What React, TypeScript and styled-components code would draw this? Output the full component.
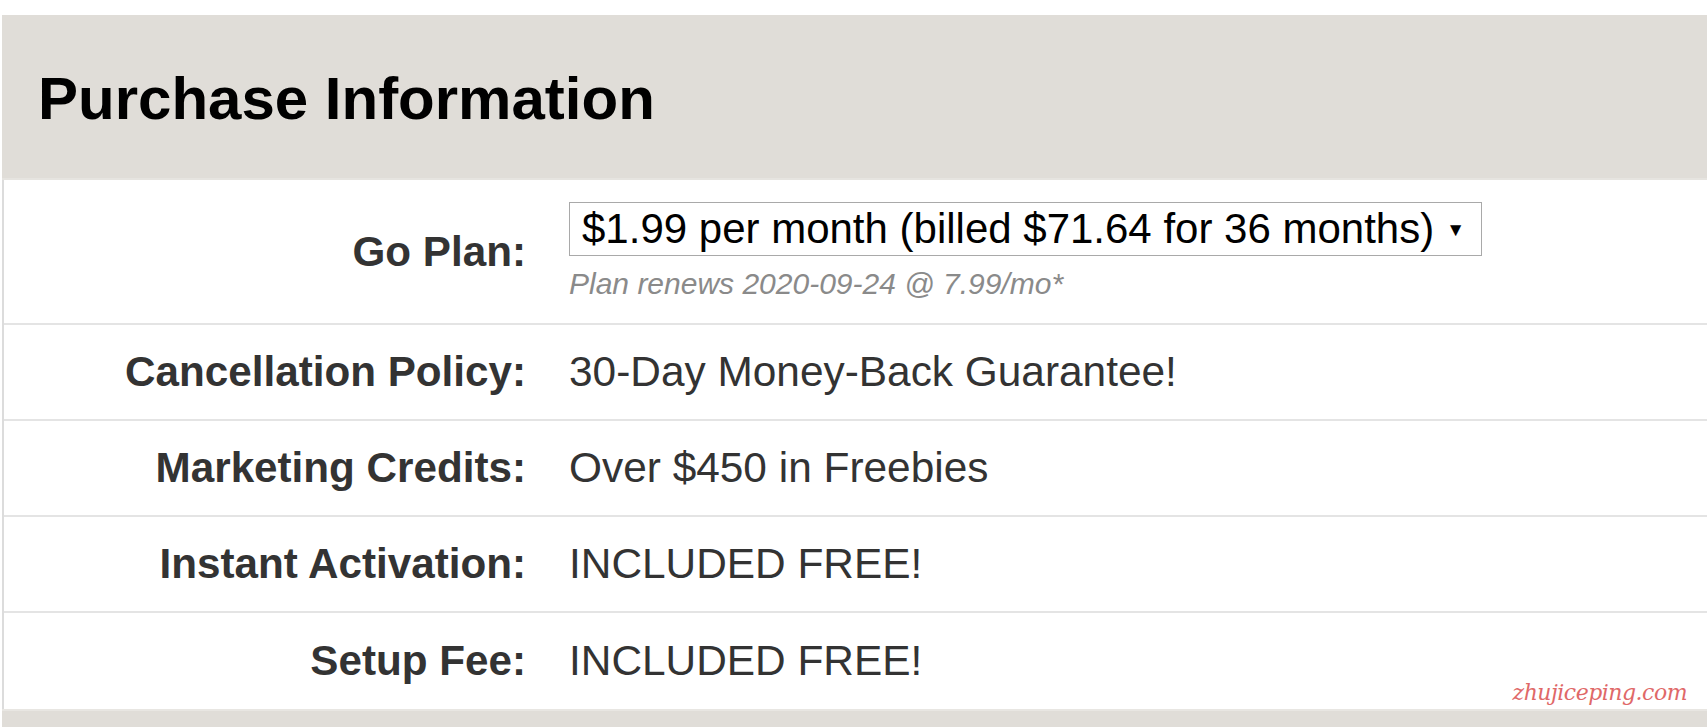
import styled, { createGlobalStyle } from 'styled-components'

const GlobalStyle = createGlobalStyle`
    html, body {
        margin: 0;
        padding: 0;
        background: #fff;
    }
    body {
        font-family: "Liberation Sans", Arial, sans-serif;
        color: #333;
    }
`

const PageStyled = styled.div`
    position: relative;
    width: 1707px;
    height: 727px;
    overflow: hidden;
    padding-top: 15px;
    padding-left: 2px;
    box-sizing: border-box;
`

const SectionStyled = styled.section`
    display: flex;
    flex-direction: column;
`

const HeaderStyled = styled.div`
    display: flex;
    align-items: center;
    height: 165px;
    padding-left: 36px;
    padding-top: 4px;
    background: #e0ddd8;
    border-bottom: 2px solid #e6e4e0;
    box-sizing: border-box;

    h2 {
        margin: 0;
        font-size: 60px;
        font-weight: 700;
        color: #000;
    }
`

const BodyStyled = styled.div`
    display: flex;
    flex-direction: column;
    border-left: 2px solid #dcdcdc;
`

type RowVar = {
    tall?: number
}

const RowStyled = styled.div<RowVar>`
    display: grid;
    grid-template-columns: 522px 1fr;
    column-gap: 43px;
    align-items: center;
    height: ${({ tall }) => (tall ? '143px' : '94px')};
    border-bottom: 2px solid #e4e4e4;

    &:last-child {
        border-bottom: 0;
        height: 96px;
    }
`

const LabelStyled = styled.div`
    text-align: right;
    font-size: 42.2px;
    font-weight: 700;
    color: #333;
`

const ValueStyled = styled.div`
    font-size: 42.4px;
    color: #333;
`

const PlanStyled = styled.div`
    display: flex;
    flex-direction: column;
    align-self: start;
    padding-top: 22px;
    gap: 11px;
`

const SelectStyled = styled.div`
    display: flex;
    align-items: center;
    justify-content: space-between;
    width: 913px;
    height: 54px;
    padding: 0 16px 0 12px;
    box-sizing: border-box;
    border: 1px solid #a9a9a9;
    background: #fff;
    font-size: 42px;
    color: #000;
    white-space: nowrap;

    .arrow {
        font-size: 19px;
        margin-top: 2px;
    }
`

const RenewStyled = styled.div`
    font-size: 30px;
    font-style: italic;
    color: #8a8a8a;
`

const NextHeaderStyled = styled.div`
    height: 20px;
    background: #e0ddd8;
    border-top: 2px solid #e8e6e2;
`

const WatermarkStyled = styled.div`
    position: absolute;
    right: 20px;
    bottom: 22px;
    font-family: "DejaVu Serif", "Liberation Serif", serif;
    font-style: italic;
    font-size: 22px;
    color: #e06868;
    letter-spacing: -0.5px;
`

const rows = [
    { label: 'Cancellation Policy:', value: '30-Day Money-Back Guarantee!' },
    { label: 'Marketing Credits:', value: 'Over $450 in Freebies' },
    { label: 'Instant Activation:', value: 'INCLUDED FREE!' },
    { label: 'Setup Fee:', value: 'INCLUDED FREE!' },
]

export default function App() {
    return (
        <>
            <GlobalStyle />
            <PageStyled>
                <SectionStyled>
                    <HeaderStyled>
                        <h2>Purchase Information</h2>
                    </HeaderStyled>
                    <BodyStyled>
                        <RowStyled tall={1}>
                            <LabelStyled>Go Plan:</LabelStyled>
                            <PlanStyled>
                                <SelectStyled>
                                    <span>$1.99 per month (billed $71.64 for 36 months)</span>
                                    <span className='arrow'>▼</span>
                                </SelectStyled>
                                <RenewStyled>Plan renews 2020-09-24 @ 7.99/mo*</RenewStyled>
                            </PlanStyled>
                        </RowStyled>
                        {rows.map((r) => (
                            <RowStyled key={r.label}>
                                <LabelStyled>{r.label}</LabelStyled>
                                <ValueStyled>{r.value}</ValueStyled>
                            </RowStyled>
                        ))}
                    </BodyStyled>
                    <NextHeaderStyled />
                </SectionStyled>
                <WatermarkStyled>zhujiceping.com</WatermarkStyled>
            </PageStyled>
        </>
    )
}
